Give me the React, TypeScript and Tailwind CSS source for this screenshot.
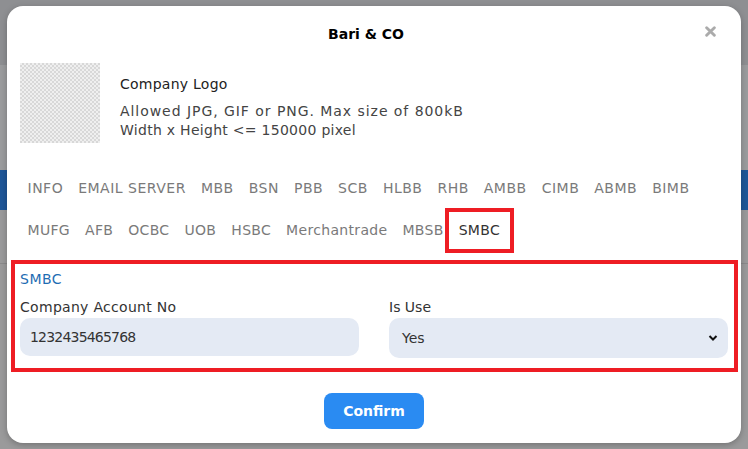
import React from "react";

const tabRows = [
  { tabs: ["INFO", "EMAIL SERVER", "MBB", "BSN", "PBB", "SCB", "HLBB", "RHB", "AMBB", "CIMB", "ABMB", "BIMB"], track: "tracking-[0.5px]" },
  { tabs: ["MUFG", "AFB", "OCBC", "UOB", "HSBC", "Merchantrade", "MBSB", "SMBC"], track: "tracking-[0.32px]" },
];

const active = "SMBC";

export default function App() {
  return (
    <div className="relative w-[748px] h-[449px] overflow-hidden bg-[#9a9a9b] font-['DejaVu_Sans',sans-serif]">
      {/* dimmed page behind the modal */}
      <div className="flex flex-col">
        <div className="h-[65px] bg-[#8e8f92]" />
        <div className="h-[105px] bg-[#9b9c9e]" />
        <div className="h-[40px] bg-[#1f5698]" />
        <div className="h-[53px] bg-[#9a9a9b]" />
        <div className="h-px bg-[#8a8a8b]" />
      </div>

      {/* modal */}
      <div className="absolute left-[7px] top-[6px] w-[734px] h-[437px] bg-white rounded-[16px] shadow-[0_2px_6px_rgba(0,0,0,0.25)] px-[13px] flex flex-col">
        <div className="relative h-[57px] flex items-center justify-center pr-[16px]">
          <h2 className="text-[14px] font-bold text-black">Bari &amp; CO</h2>
          <button className="absolute right-[12px] top-[19px] w-[12px] h-[12px] flex items-center justify-center">
            <svg width="11" height="11" viewBox="0 0 10 10">
              <path d="M1.5 1.5 L8.5 8.5 M8.5 1.5 L1.5 8.5" stroke="#ababab" strokeWidth="2.6" strokeLinecap="round" />
            </svg>
          </button>
        </div>

        <div className="flex gap-[20px]">
          <div className="w-[80px] h-[80px] bg-[repeating-conic-gradient(#d8d8d8_0%_25%,#efefef_0%_50%)] bg-[length:4px_4px]" />
          <div className="pt-[11px] text-[14px]">
            <div className="leading-[20px] text-[#222] tracking-[0.25px]">Company Logo</div>
            <div className="mt-[8px] leading-[19px] text-[#444]">
              <div className="tracking-[0.95px]">Allowed JPG, GIF or PNG. Max size of 800kB</div>
              <div className="tracking-[0.28px]">Width x Height &lt;= 150000 pixel</div>
            </div>
          </div>
        </div>

        <div className="mt-[24px] flex flex-col">
          {tabRows.map((row, i) => (
            <div key={i} className="flex">
              {row.tabs.map((t) => (
                <div
                  key={t}
                  className={
                    "relative h-[42px] px-[7.5px] flex items-center text-[14px] " +
                    row.track +
                    (t === active ? " text-[#333]" : " text-[#7a7a7a]")
                  }
                >
                  {t}
                  {t === active && (
                    <div className="absolute left-[-6px] right-[-6px] top-[-1px] bottom-[-2px] border-[4px] border-[#ee1d24]" />
                  )}
                </div>
              ))}
            </div>
          ))}
        </div>

        <div className="relative mt-[18px]">
          <div className="absolute left-[-9px] right-[-10px] top-[-9px] bottom-[-14px] border-[4px] border-[#ee1d24]" />
          <div className="leading-[20px] text-[14px] text-[#1f6db3] tracking-[0.5px]">SMBC</div>
          <div className="mt-[8px] grid grid-cols-2 gap-[30px]">
            <div>
              <div className="leading-[20px] text-[14px] text-[#333] tracking-[0.3px]">Company Account No</div>
              <div className="mt-px h-[38px] rounded-[10px] bg-[#e4eaf4] px-[10px] flex items-center text-[14px] text-[#333] tracking-[-0.8px]">
                1232435465768
              </div>
            </div>
            <div>
              <div className="leading-[20px] text-[14px] text-[#333]">Is Use</div>
              <div className="mt-px h-[40px] rounded-[10px] bg-[#e4eaf4] pl-[13px] pr-[10px] flex items-center justify-between text-[14px] text-[#333]">
                <span>Yes</span>
                <svg width="10" height="8" viewBox="0 0 10 8">
                  <path d="M1.5 2 L5 5.5 L8.5 2" stroke="#111" strokeWidth="2" fill="none" />
                </svg>
              </div>
            </div>
          </div>
        </div>

        <div className="mt-[35px] flex justify-center">
          <button className="w-[100px] h-[36px] rounded-[8px] bg-[#2a8bf2] text-white text-[14px] font-bold">
            Confirm
          </button>
        </div>
      </div>
    </div>
  );
}
